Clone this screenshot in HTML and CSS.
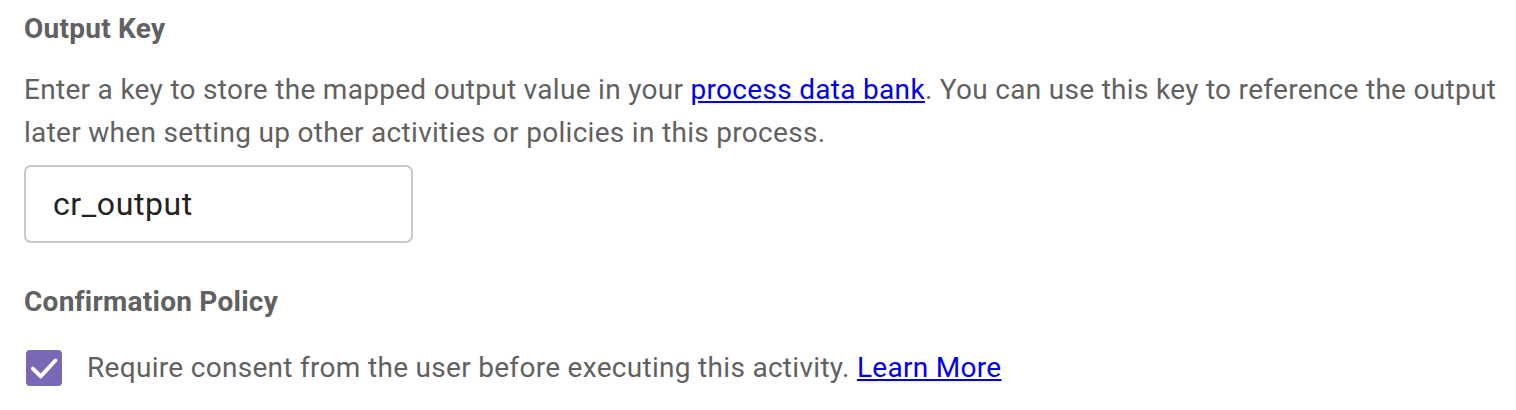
FILE: index.html
```html
<!DOCTYPE html>
<html>
<head>
<meta charset="utf-8">
<link rel="stylesheet" href="styles.css">
</head>
<body>
<div class="panel">
  <section class="field">
    <h3 class="label">Output Key</h3>
    <p class="desc">Enter a key to store the mapped output value in your <a href="#">process data bank</a>. You can use this key to reference the output later when setting up other activities or policies in this process.</p>
    <div class="input">cr_output</div>
  </section>
  <section class="field policy">
    <h3 class="label">Confirmation Policy</h3>
    <div class="check-row">
      <span class="checkbox">
        <svg viewBox="0 0 24 24" width="36" height="36"><path d="M4.6 12.4l5.2 5.2L19.6 7" fill="none" stroke="#fff" stroke-width="2.6" stroke-linecap="round" stroke-linejoin="round"/></svg>
      </span>
      <span class="check-text">Require consent from the user before executing this activity. <a href="#">Learn More</a></span>
    </div>
  </section>
</div>
</body>
</html>
```
FILE: styles.css
```css
* { box-sizing: border-box; }
body {
  margin: 0;
  background: #fff;
  font-family: Roboto, "Liberation Sans", sans-serif;
  color: #616161;
}
.panel {
  padding: 9px 8px 0 24px;
  display: flex;
  flex-direction: column;
}
.label {
  margin: 0;
  font-size: 28px;
  font-weight: 700;
  line-height: 40px;
  letter-spacing: 0.25px;
  color: #616161;
}
.desc {
  margin: 19px 0 0 0;
  font-size: 28px;
  line-height: 43px;
  letter-spacing: 0.3px;
}
.desc a, .check-text a {
  color: #0000ee;
  text-decoration: underline;
}
.input {
  margin-top: 11px;
  width: 389px;
  height: 78px;
  border: 2px solid #c8c8c8;
  border-radius: 7px;
  padding: 0 27px;
  display: flex;
  align-items: center;
  font-size: 32px;
  letter-spacing: 0.6px;
  color: #222;
}
.policy { margin-top: 39px; }
.check-row {
  margin-top: 28px;
  display: flex;
  align-items: center;
  gap: 25px;
}
.checkbox {
  width: 36px;
  height: 36px;
  border-radius: 4px;
  background: #7a68b6;
  display: flex;
  align-items: center;
  justify-content: center;
  margin-left: 2px;
}
.check-text {
  font-size: 28px;
  line-height: 36px;
  letter-spacing: 0.3px;
}
```
